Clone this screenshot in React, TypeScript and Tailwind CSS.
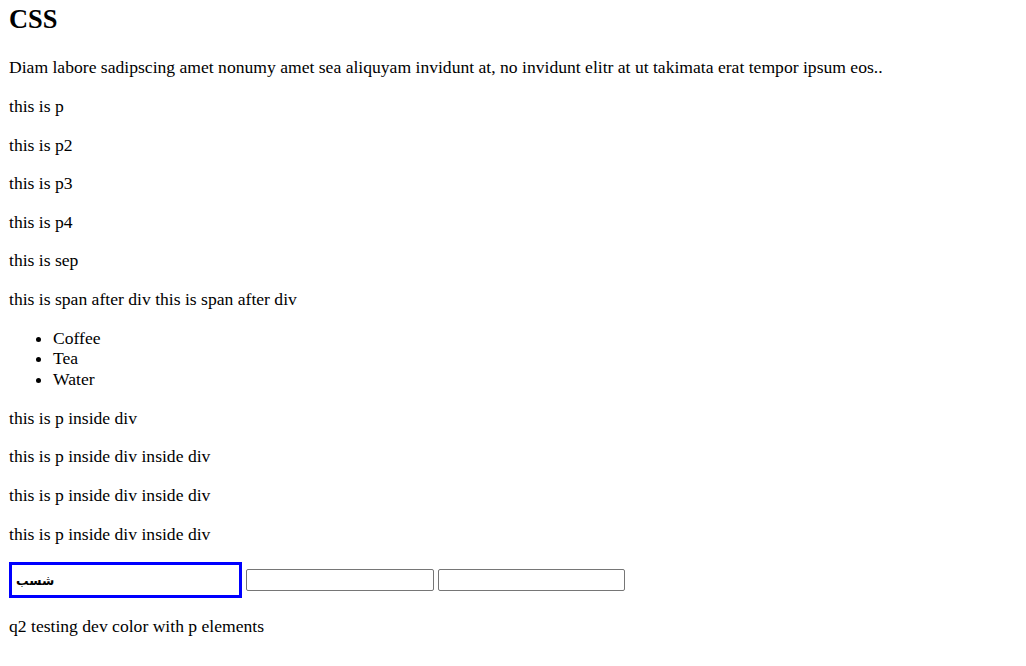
const paragraphs = ['this is p', 'this is p2', 'this is p3', 'this is p4', 'this is sep'];
const nested = [
  'this is p inside div',
  'this is p inside div inside div',
  'this is p inside div inside div',
  'this is p inside div inside div',
];

export default function App() {
  return (
    <div className="min-h-[666px] bg-white px-[9px] pt-[4px] font-['Liberation_Serif',serif] text-[17.6px] leading-[20.8px] text-black">
      <h1 className="mb-[22.4px] text-[26.4px] font-bold leading-[31px]">CSS</h1>
      <p className="mb-[17.8px]">
        Diam labore sadipscing amet nonumy amet sea aliquyam invidunt at, no invidunt elitr at ut takimata erat tempor ipsum eos..
      </p>
      {paragraphs.map((t) => (
        <p key={t} className="mb-[17.8px]">
          {t}
        </p>
      ))}
      <div className="mb-[17.8px]">
        <span>this is span after div</span> <span>this is span after div</span>
      </div>
      <ul className="mb-[17.8px] list-disc pl-[44px]">
        <li>Coffee</li>
        <li>Tea</li>
        <li>Water</li>
      </ul>
      {nested.map((t, i) => (
        <p key={i} className="mb-[17.8px]">
          {t}
        </p>
      ))}
      <div className="mb-[17.8px] flex items-center gap-[4px]">
        <input
          type="text"
          defaultValue="شسب"
          className="h-[36px] w-[233px] border-[3px] border-[#0000ff] px-[4px] font-['DejaVu_Sans',sans-serif] text-[12.5px] font-bold text-black outline-none"
        />
        <input
          type="text"
          className="h-[22px] w-[188px] rounded-[2px] border border-[#767676] px-[2px] font-['Liberation_Sans',sans-serif] text-[15px] outline-none"
        />
        <input
          type="text"
          className="h-[22px] w-[187px] rounded-[2px] border border-[#767676] px-[2px] font-['Liberation_Sans',sans-serif] text-[15px] outline-none"
        />
      </div>
      <p>q2 testing dev color with p elements</p>
    </div>
  );
}
